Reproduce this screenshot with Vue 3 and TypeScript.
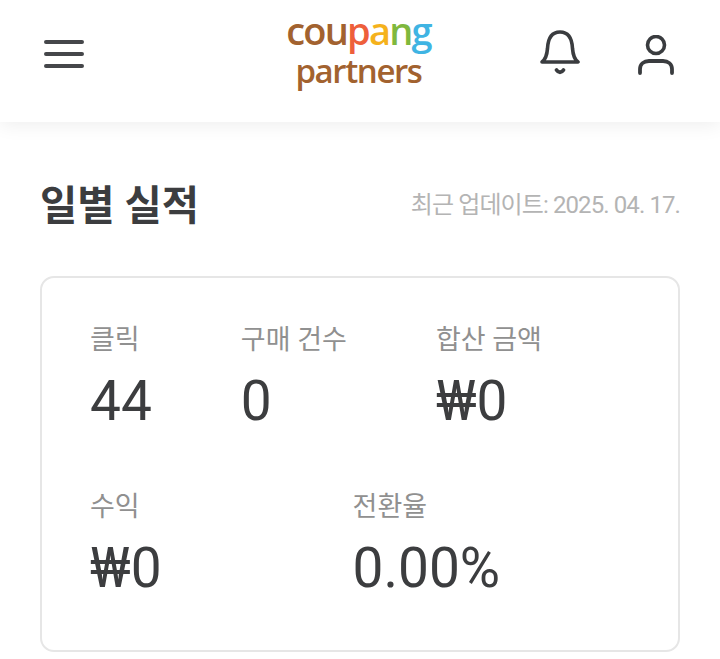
<template>
  <div class="page">
    <header class="top-bar">
      <button type="button" class="icon-btn menu-btn" aria-label="메뉴">
        <svg width="40" height="28" viewBox="0 0 40 28">
          <path d="M2 2H38M2 14H38M2 26H38" fill="none" stroke="#45474a" stroke-width="4" stroke-linecap="round" />
        </svg>
      </button>
      <div class="logo">
        <div class="logo-main">
          <span v-for="part in logoParts" :key="part.text" :style="{ color: part.color }">{{ part.text }}</span>
        </div>
        <div class="logo-sub">partners</div>
      </div>
      <div class="top-actions">
        <button type="button" class="icon-btn" aria-label="알림">
          <svg width="40" height="46" viewBox="0 0 40 46">
            <path d="M2 32C6 29 7 25 7.500 18.500C8 8 12 2 20 2C28 2 32 8 32.500 18.500C33 25 34 29 38 32Z" fill="none" stroke="#3a3c3f" stroke-width="3.600" stroke-linejoin="round" />
            <path d="M16.500 40C18.500 43 21.500 43 23.500 40" fill="none" stroke="#3a3c3f" stroke-width="3.800" stroke-linecap="round" />
          </svg>
        </button>
        <button type="button" class="icon-btn user-btn" aria-label="내 정보">
          <svg width="36" height="40" viewBox="0 0 36 40">
            <circle cx="18" cy="10" r="8.500" fill="none" stroke="#3a3c3f" stroke-width="3.600" />
            <path d="M2 38V34C2 29 6 26 11 26H25C30 26 34 29 34 34V38" fill="none" stroke="#3a3c3f" stroke-width="3.800" stroke-linecap="round" />
          </svg>
        </button>
      </div>
    </header>

    <main class="content">
      <div class="title-row">
        <h1 class="title">일별 실적</h1>
        <span class="updated">최근 업데이트: 2025. 04. 17.</span>
      </div>
      <section class="card">
        <div v-for="(row, idx) in rows" :key="idx" class="stat-row" :class="`stat-row-${idx + 1}`">
          <div v-for="stat in row" :key="stat.label" class="stat">
            <div class="stat-label">{{ stat.label }}</div>
            <div class="stat-value">{{ stat.value }}</div>
          </div>
        </div>
      </section>
    </main>
  </div>
</template>

<script setup lang="ts">
const logoParts = [
  { text: 'cou', color: '#a2622f' },
  { text: 'p', color: '#ee5f3b' },
  { text: 'a', color: '#f5b21c' },
  { text: 'n', color: '#7fb83d' },
  { text: 'g', color: '#3fb4e3' }
]

const rows = [
  [
    { label: '클릭', value: '44' },
    { label: '구매 건수', value: '0' },
    { label: '합산 금액', value: '₩0' }
  ],
  [
    { label: '수익', value: '₩0' },
    { label: '전환율', value: '0.00%' }
  ]
]
</script>

<style>
html,
body {
  margin: 0;
  background: #fff;
}
</style>

<style scoped>
.page {
  width: 720px;
  height: 659px;
  overflow: hidden;
  background: #fff;
  font-family: Roboto, "Noto Sans CJK KR", sans-serif;
}

.top-bar {
  display: grid;
  grid-template-columns: 1fr auto 1fr;
  align-items: start;
  height: 122px;
  padding: 0 46px 0 44px;
  box-sizing: border-box;
  background: #fff;
  box-shadow: 0 3px 18px rgba(0, 0, 0, 0.07);
}

.icon-btn {
  display: block;
  padding: 0;
  border: 0;
  background: none;
}

.icon-btn svg {
  display: block;
}

.menu-btn {
  margin-top: 40px;
}

.logo {
  margin-top: 10px;
  margin-left: -1px;
  text-align: center;
  font-family: "Open Sans", sans-serif;
  font-weight: 600;
  white-space: nowrap;
}

.logo-main {
  font-size: 38px;
  line-height: 40px;
  letter-spacing: -1.8px;
}

.logo-sub {
  font-size: 33px;
  line-height: 42px;
  letter-spacing: -1.4px;
  color: #a2622f;
}

.top-actions {
  display: flex;
  justify-content: flex-end;
  gap: 58px;
  margin-top: 30px;
}

.user-btn {
  margin-top: 3px;
}

.content {
  padding: 54px 40px 0;
}

.title-row {
  display: flex;
  align-items: center;
  justify-content: space-between;
  height: 60px;
}

.title {
  margin: 0;
  font-size: 40.500px;
  line-height: 60px;
  font-weight: 700;
  color: #3c3d3f;
}

.updated {
  margin-top: -8px;
  font-size: 24px;
  color: #b4b4b4;
  letter-spacing: -0.9px;
}

.card {
  margin-top: 40px;
  height: 376px;
  box-sizing: border-box;
  padding: 44px 48px 0;
  border: 2px solid #e6e6e6;
  border-radius: 14px;
}

.stat-row {
  display: flex;
}

.stat-row-1 {
  gap: 89px;
  margin-bottom: 54px;
}

.stat-row-2 {
  gap: 191px;
}

.stat-label {
  margin-bottom: 9px;
  font-size: 27px;
  line-height: 36px;
  color: #909090;
}

.stat-value {
  font-size: 55px;
  line-height: 68px;
  color: #3c3d3f;
}
</style>
